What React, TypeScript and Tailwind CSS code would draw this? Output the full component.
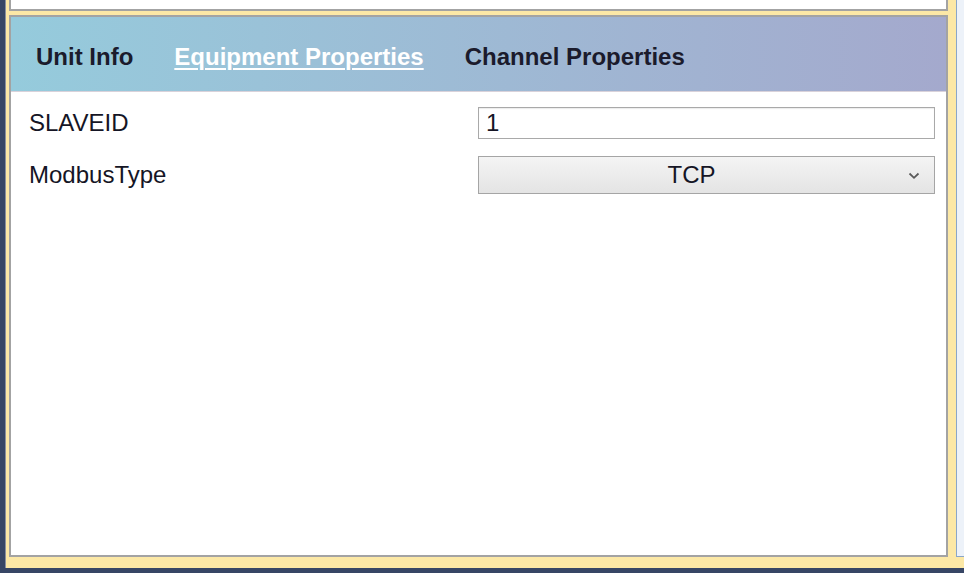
import { useState } from "react";

// Device editor panel: tab strip over a property grid, inside the host window's frame.
const TABS = ["Unit Info", "Equipment Properties", "Channel Properties"];

export default function App() {
  const [tab, setTab] = useState(1);
  const [slaveId, setSlaveId] = useState("1");
  const [modbusType, setModbusType] = useState("TCP");

  return (
    <div className="w-[964px] h-[573px] overflow-hidden bg-[#374665] pl-[5px] pb-[5px] flex font-['Liberation_Sans',Arial,sans-serif]">
      <div className="flex flex-1 bg-[#fce8a6] border-l border-[#8a90a0]">
        <div className="flex flex-col flex-1 pl-[3px] pr-[8px] pb-[11px]">
          <div className="h-[11px] shrink-0 bg-white border-2 border-t-0 border-[#a3a3a3]" />
          <div className="mt-[4px] flex flex-col flex-1 bg-white border-2 border-[#a3a3a3]">
            <div className="h-[75px] shrink-0 flex items-center gap-[41px] pl-[25px] pt-[5px] bg-gradient-to-r from-[#95cbdc] to-[#a4a9cd] border-b border-[#d9d2da]">
              {TABS.map((t, i) => (
                <button
                  key={t}
                  onClick={() => setTab(i)}
                  className={
                    i === tab
                      ? "text-[24px] font-bold text-white underline decoration-2 underline-offset-[3px] leading-none"
                      : "text-[24px] font-bold text-[#1b1b2c] leading-none"
                  }
                >
                  {t}
                </button>
              ))}
            </div>

            <div className="flex flex-col gap-[15px] pt-[13px] pl-[18px] pr-[11px]">
              <div className="flex items-center">
                <span className="flex-1 text-[24px] text-[#151525]">SLAVEID</span>
                <input
                  value={slaveId}
                  onChange={(e) => setSlaveId(e.target.value)}
                  className="w-[457px] h-[32px] border border-[#a9a9a9] bg-white px-[7px] text-[24px] text-[#151525] outline-none shadow-[inset_0_1px_1px_rgba(0,0,0,0.08)]"
                />
              </div>
              <div className="flex items-center">
                <span className="flex-1 text-[24px] text-[#151525]">ModbusType</span>
                <label className="relative w-[457px] h-[38px] flex items-center border border-[#a5a5a5] bg-gradient-to-b from-[#f4f4f4] to-[#e4e4e4]">
                  <span className="flex-1 pr-[30px] text-center text-[24px] text-[#151525]">{modbusType}</span>
                  <svg className="absolute right-[14px] top-[15px]" width="12" height="8" viewBox="0 0 12 8" fill="none">
                    <path d="M1.5 1.5 L6 5.8 L10.5 1.5" stroke="#5a5a5a" strokeWidth="1.8" />
                  </svg>
                  <select
                    value={modbusType}
                    onChange={(e) => setModbusType(e.target.value)}
                    className="absolute inset-0 opacity-0 cursor-pointer"
                  >
                    <option>TCP</option>
                    <option>RTU</option>
                    <option>ASCII</option>
                  </select>
                </label>
              </div>
            </div>
          </div>
        </div>
        <div className="w-[8px] mb-[11px] bg-[#edf2f9] border-l border-b border-[#8aa6c9]" />
      </div>
    </div>
  );
}
